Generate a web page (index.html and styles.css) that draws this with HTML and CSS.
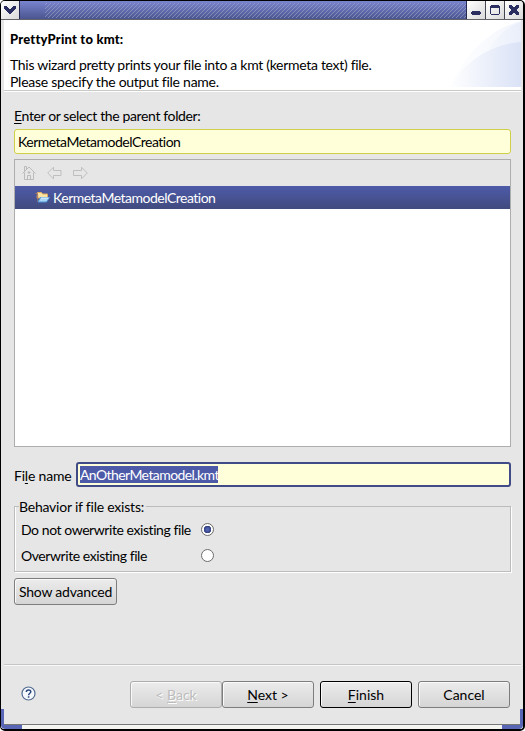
FILE: index.html
```html
<!DOCTYPE html>
<html lang="en">
<head>
<meta charset="utf-8">
<title>PrettyPrint to kmt</title>
<link rel="stylesheet" href="styles.css">
</head>
<body>
<main class="window">
  <header class="titlebar">
    <button class="tb tb-menu" aria-label="Menu"><svg width="18" height="18" shape-rendering="crispEdges"><path d="M3 5h3v1h1v1h1v1h2v-1h1v-1h1v-1h3v3h-1v1h-1v1h-1v1h-1v1h-1v1h-2v-1h-1v-1h-1v-1h-1v-1h-1v-1h-1z" fill="#292d60"/></svg></button>
    <div class="tb-drag"><svg class="hatch" width="421" height="18" shape-rendering="crispEdges"><defs><pattern id="h" width="4" height="4" patternUnits="userSpaceOnUse"><path d="M3 0h1v1h-1zM2 1h1v1h-1zM1 2h1v1h-1zM0 3h1v1h-1z" fill="#a5aac8" fill-opacity=".55"/></pattern></defs><path d="M0 2h421v15H0z" fill="url(#h)"/></svg></div>
    <button class="tb" aria-label="Minimize"><svg width="18" height="18" shape-rendering="crispEdges"><path d="M5 10h8v1h1v2h-1v1h-8v-1h-1v-2h1z" fill="#292d60"/></svg></button>
    <button class="tb" aria-label="Maximize"><svg width="18" height="18" shape-rendering="crispEdges"><path d="M5 4h8v1h1v8h-1v1h-8v-1h-1v-8h1zM5 7v6h8v-6z" fill="#292d60" fill-rule="evenodd"/></svg></button>
    <button class="tb tb-close" aria-label="Close"><svg width="18" height="18" shape-rendering="crispEdges"><path d="M4 4h3v1h1v1h2v-1h1v-1h3v3h-1v1h-1v2h1v1h1v3h-3v-1h-1v-1h-2v1h-1v1h-3v-3h1v-1h1v-2h-1v-1h-1z" fill="#292d60"/></svg></button>
  </header>
  <section class="banner">
    <svg class="swoosh" width="72" height="66">
      <defs>
        <linearGradient id="ga"><stop offset="0" stop-color="#fff"/><stop offset="1" stop-color="#dfe7f8"/></linearGradient>
        <linearGradient id="gb"><stop offset="0" stop-color="#fff"/><stop offset="1" stop-color="#dae2f6"/></linearGradient>
      </defs>
      <path d="M0 66C16 34 40 8 72 0V66z" fill="url(#ga)" opacity=".4"/>
      <path d="M34 38C44 22 54 6 72 1V66H20z" fill="url(#ga)" opacity=".5"/>
      <path d="M0 66C16 42 38 24 72 21V66z" fill="url(#gb)"/>
    </svg>
    <h1><span class="t-title">PrettyPrint to kmt:</span></h1>
    <p><span class="t-line1">This wizard pretty prints your file into a kmt (kermeta text) file.</span><br><span class="t-line2">Please specify the output file name.</span></p>
  </section>
  <section class="content">
    <label class="folder-label"><span class="t-enter"><u>E</u>nter or select the parent folder:</span></label>
    <div class="field"><span class="t-folder">KermetaMetamodelCreation</span></div>
    <div class="tree">
      <div class="toolbar">
        <svg width="14" height="16" fill="none" stroke="#bbb"><path d="M.5 8.500L7 2l6.500 6.500M2.500 7.500v7h9v-7M2.500 6V1.500h2V4M5.500 14.500v-4h3v4M5.500 7.500h3M7 6v3"/></svg>
        <svg width="15" height="14" fill="none" stroke="#bfbfbf"><path d="M.7 7L6.500 1.200V4.500h7.500v5H6.500v3.300z"/></svg>
        <svg width="15" height="14" fill="none" stroke="#bfbfbf"><path d="M14.300 7L8.500 1.200V4.500H.5v5h8v3.300z"/></svg>
      </div>
      <div class="row">
        <svg width="15" height="13"><path d="M2.500 2.500V1.500h4l1 1.500h5V7H2z" fill="#f9e4a4" stroke="#e0ac5c"/><path d="M.5 2.500h2L3 11" fill="none" stroke="#a77b65"/><path d="M3 11L5.500 6.500h9L11.500 11z" fill="#a9d5f5" stroke="#4b92d5"/><path d="M6 7h7.500" stroke="#e9f7ff"/></svg>
        <span class="t-folder">KermetaMetamodelCreation</span>
      </div>
    </div>
    <div class="file">
      <label><span class="t-file">Fi<u>l</u>e name</span></label>
      <div class="field focused"><mark><span class="t-value">AnOtherMetamodel.kmt</span></mark></div>
    </div>
    <fieldset>
      <legend><span class="t-behavior">Behavior if file exists:</span></legend>
      <div class="option"><span class="opt-text"><span class="t-donot">Do not owerwrite existing file</span></span><i class="radio checked"></i></div>
      <div class="option"><span class="opt-text"><span class="t-over">Overwrite existing file</span></span><i class="radio"></i></div>
    </fieldset>
    <button class="btn advanced"><span class="t-adv">Show advanced</span></button>
  </section>
  <footer>
    <svg class="help" width="15" height="15" fill="none"><circle cx="7.500" cy="7.500" r="6.500" fill="#f5f9fd" stroke="#536b91" stroke-width="1.200"/><path d="M5.300 6.100C5.300 3.200 9.800 3.300 9.800 5.800C9.800 7.300 7.600 7.300 7.600 9.200" stroke="#29477d" stroke-width="1.500"/><path d="M6.800 10.200h1.600v1.600h-1.600z" fill="#29477d"/></svg>
    <button class="btn back" disabled><span class="t-back">&lt; <u>B</u>ack</span></button>
    <button class="btn next"><span class="t-next"><u>N</u>ext &gt;</span></button>
    <button class="btn finish"><span class="t-finish"><u>F</u>inish</span></button>
    <button class="btn cancel"><span class="t-cancel">Cancel</span></button>
  </footer>
  <i class="grip grip-left"></i><i class="grip grip-right"></i>
</main>
</body>
</html>
```
FILE: styles.css
```css
* { box-sizing: border-box; }
body { margin: 0; background: #fff; color: #000; font: 14px/17px Lato, "Liberation Sans", sans-serif; font-variant-ligatures: none; }
.window { position: relative; width: 525px; height: 731px; display: flex; flex-direction: column; background: #e6e6e6; border: 1px solid #000; border-right-width: 2px; border-bottom-width: 2px; border-radius: 5px; overflow: hidden; }
.titlebar { display: flex; height: 19px; flex: none; border-bottom: 1px solid #62626a; }
.tb { display: block; width: 19px; height: 18px; padding: 0; border: 0; border-right: 1px solid #44464f; background: linear-gradient(135deg, #fff, #d9d9d9); }
.tb svg { display: block; }
.tb-menu { border-color: #252850; }
.tb-close { border: 0; width: 18px; }
.tb-drag { flex: 1; min-width: 0; padding-left: 25px; background: linear-gradient(#7984cf, #4a5590); border-right: 1px solid #252850; overflow: hidden; }
.hatch { display: block; }
.banner { position: relative; flex: none; height: 72px; margin: 0 2px 0 3px; background: #fff; border-bottom: 1px solid #fff; box-shadow: inset 0 -1px #c8c8c5; padding: 11px 6px 0; }
.swoosh { position: absolute; right: 0; top: 1px; }
h1 { margin: 0; font-size: 13px; line-height: 17px; font-weight: 900; }
p { margin: 8px 0 0; }
p, label, .field, .row, legend, .option, .btn { white-space: nowrap; }
u { text-decoration: underline; text-underline-offset: 2px; text-decoration-thickness: 1px; text-decoration-skip-ink: none; }
.t-title { letter-spacing: .2px; }
.t-line1 { letter-spacing: -.3px; }
.t-line2 { letter-spacing: -.26px; }
.t-enter { letter-spacing: -.37px; }
.t-folder { letter-spacing: -.5px; }
.t-file { letter-spacing: -.2px; }
.t-value { letter-spacing: -.58px; }
.t-behavior { letter-spacing: -.22px; }
.t-donot, .t-over { letter-spacing: -.43px; }
.t-adv { letter-spacing: -.2px; }
.content { flex: 1; padding: 16px 12px 0 13px; display: flex; flex-direction: column; }
.folder-label { height: 21px; margin-top: -1px; margin-bottom: 1px; }
.field { height: 25px; padding: 3px; background: #ffffd9; border: 1px solid #cfcf4a; border-radius: 3px; }
.tree { height: 288px; margin-top: 5px; background: #fff; border: 1px solid #adadad; }
.toolbar { height: 26px; background: #e6e6e6; padding-left: 7px; display: flex; align-items: center; gap: 11px; }
.row { height: 23px; padding: 3px 0 0 20px; display: flex; gap: 3px; background: linear-gradient(#4d5ba9, #414b7e); color: #fff; }
.row svg { margin-top: 2px; }
.file { display: flex; margin-top: 15px; }
.file label { width: 62px; padding-top: 5px; }
.file .field { flex: 1; border: 2px solid #404b87; padding: 2px; }
mark { display: block; width: 138px; height: 17px; background: #4d5aa8; color: #fff; }
fieldset { height: 74px; margin: 11px 0 0; padding: 1px 0 0 5px; border: 1px solid #bcbcbc; box-shadow: 1px 1px #fff, inset 1px 0 #fff; min-width: 0; }
legend { padding: 0 2px 0 0; margin-left: -1px; height: 17px; }
.option { display: flex; height: 26px; align-items: center; }
.opt-text { width: 181px; padding-left: 1px; }
.radio { width: 13px; height: 13px; border: 1px solid #6c6c6c; border-radius: 50%; background: #fff; }
.checked { background: radial-gradient(circle at 5.500px 5.500px, #5364b0 0 1px, #303d80 3.500px, #fff 4px); }
.btn { font: inherit; color: #000; height: 27px; padding: 0; border: 1px solid #7d7d7d; border-radius: 3px; background: linear-gradient(#ececec, #d5d5d5); box-shadow: inset 1px 1px #fafafa; text-align: center; }
.advanced { width: 103px; margin-top: 6px; }
footer { flex: none; height: 60px; margin: 0 2px 0 3px; border-top: 1px solid #c6c6c6; box-shadow: inset 0 1px #f8f8f8; display: flex; padding: 16px 10px 0 17px; }
.window::after { content: ""; flex: none; height: 4px; background: #f4f4f0; border-top: 1px solid #777; }
.help { margin: 5px 94px 0 0; }
footer .btn { width: 92px; }
footer .finish { margin-left: 6px; border-color: #000; }
footer .cancel { margin-left: 6px; }
.btn:disabled { color: #bcbcbc; border-color: #adadad; text-shadow: 1px 1px #fff; }
.grip { position: absolute; bottom: 0; width: 21px; height: 20px; border: solid #5966b5; }
.grip-left { left: 0; border-width: 0 0 4px 3px; border-bottom-left-radius: 4px; }
.grip-right { right: 0; border-width: 0 3px 4px 0; border-bottom-right-radius: 4px; }
```
